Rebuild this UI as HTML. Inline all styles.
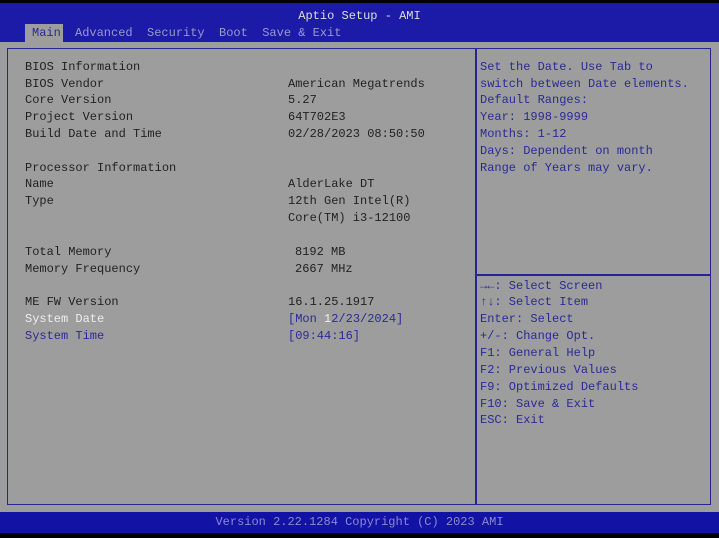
<!DOCTYPE html>
<html><head><style>
*{margin:0;padding:0}
body{width:719px;height:538px;background:#000;position:relative;overflow:hidden;font-family:"Liberation Mono",monospace;font-size:12px}
.t{position:absolute;white-space:pre;line-height:14px;transform:translateY(-7px);color:#222}
.b{color:#2a2a96}
.w{color:#eee}
</style></head><body>
<div style="position:absolute;left:0;top:3px;width:719px;height:39px;background:#1b1ba8"></div>
<div style="position:absolute;left:0;top:42px;width:719px;height:470px;background:#9d9d9d"></div>
<div style="position:absolute;left:0;top:512px;width:719px;height:21px;background:#1212a4"></div>
<div style="position:absolute;left:7px;top:48px;width:702px;height:455px;border:1.5px solid #262690"></div>
<div style="position:absolute;left:475px;top:48px;width:1.5px;height:456px;background:#262690"></div>
<div style="position:absolute;left:476px;top:274px;width:234px;height:1.5px;background:#262690"></div>
<div style="position:absolute;left:25px;top:24px;width:38px;height:18px;background:#9d9d9d"></div>
<div class="t" style="left:0;width:719px;text-align:center;top:16px;color:#ddd">Aptio Setup - AMI</div>
<div class="t" style="left:32px;top:33px;color:#2a2a96">Main</div>
<div class="t" style="left:75px;top:33px;color:#9a9ac8">Advanced  Security  Boot  Save &amp; Exit</div>

<div class="t" style="left:25px;top:67px">BIOS Information</div>
<div class="t" style="left:25px;top:84px">BIOS Vendor</div>
<div class="t" style="left:25px;top:100px">Core Version</div>
<div class="t" style="left:25px;top:117px">Project Version</div>
<div class="t" style="left:25px;top:134px">Build Date and Time</div>
<div class="t" style="left:25px;top:168px">Processor Information</div>
<div class="t" style="left:25px;top:184px">Name</div>
<div class="t" style="left:25px;top:201px">Type</div>
<div class="t" style="left:25px;top:252px">Total Memory</div>
<div class="t" style="left:25px;top:269px">Memory Frequency</div>
<div class="t" style="left:25px;top:302px">ME FW Version</div>
<div class="t w" style="left:25px;top:319px">System Date</div>
<div class="t b" style="left:25px;top:336px">System Time</div>

<div class="t" style="left:288px;top:84px">American Megatrends</div>
<div class="t" style="left:288px;top:100px">5.27</div>
<div class="t" style="left:288px;top:117px">64T702E3</div>
<div class="t" style="left:288px;top:134px">02/28/2023 08:50:50</div>
<div class="t" style="left:288px;top:184px">AlderLake DT</div>
<div class="t" style="left:288px;top:201px">12th Gen Intel(R)</div>
<div class="t" style="left:288px;top:218px">Core(TM) i3-12100</div>
<div class="t" style="left:295px;top:252px">8192 MB</div>
<div class="t" style="left:295px;top:269px">2667 MHz</div>
<div class="t" style="left:288px;top:302px">16.1.25.1917</div>
<div class="t b" style="left:288px;top:319px">[Mon <span class="w">1</span>2/23/2024]</div>
<div class="t b" style="left:288px;top:336px">[09:44:16]</div>

<div class="t b" style="left:480px;top:67px">Set the Date. Use Tab to</div>
<div class="t b" style="left:480px;top:84px">switch between Date elements.</div>
<div class="t b" style="left:480px;top:100px">Default Ranges:</div>
<div class="t b" style="left:480px;top:117px">Year: 1998-9999</div>
<div class="t b" style="left:480px;top:134px">Months: 1-12</div>
<div class="t b" style="left:480px;top:151px">Days: Dependent on month</div>
<div class="t b" style="left:480px;top:168px">Range of Years may vary.</div>

<div class="t b" style="left:480px;top:286px">→←: Select Screen</div>
<div class="t b" style="left:480px;top:302px">↑↓: Select Item</div>
<div class="t b" style="left:480px;top:319px">Enter: Select</div>
<div class="t b" style="left:480px;top:336px">+/-: Change Opt.</div>
<div class="t b" style="left:480px;top:353px">F1: General Help</div>
<div class="t b" style="left:480px;top:370px">F2: Previous Values</div>
<div class="t b" style="left:480px;top:387px">F9: Optimized Defaults</div>
<div class="t b" style="left:480px;top:404px">F10: Save &amp; Exit</div>
<div class="t b" style="left:480px;top:420px">ESC: Exit</div>

<div class="t" style="left:0;width:719px;text-align:center;top:522px;color:#8a8ad0">Version 2.22.1284 Copyright (C) 2023 AMI</div>
</body></html>
